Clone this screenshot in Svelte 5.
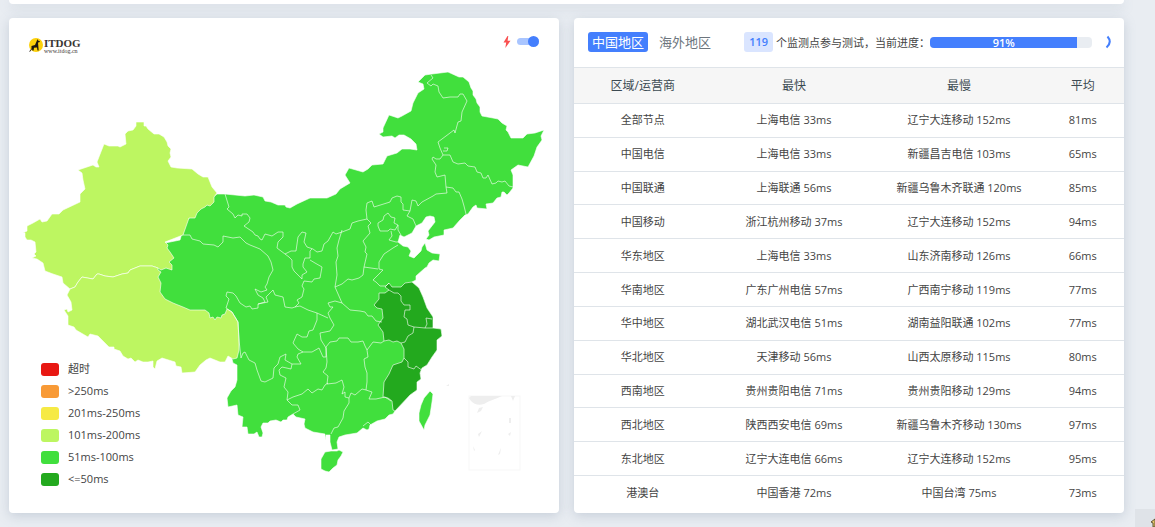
<!-- SpeedResult.svelte -->
<script>
    let region = 'cn';
    let live = true;
    let percent = 91;

    const tabs = [
        { id: 'cn', text: '中国地区' },
        { id: 'sea', text: '海外地区' }
    ];

    const legend = [
        { color: '#e81813', text: '超时' },
        { color: '#f89a36', text: '>250ms' },
        { color: '#f6ea45', text: '201ms-250ms' },
        { color: '#bdf661', text: '101ms-200ms' },
        { color: '#41df3d', text: '51ms-100ms' },
        { color: '#23a91e', text: '<=50ms' }
    ];

    const rows = [
        ['全部节点', '上海电信 33ms', '辽宁大连移动 152ms', '81ms'],
        ['中国电信', '上海电信 33ms', '新疆昌吉电信 103ms', '65ms'],
        ['中国联通', '上海联通 56ms', '新疆乌鲁木齐联通 120ms', '85ms'],
        ['中国移动', '浙江杭州移动 37ms', '辽宁大连移动 152ms', '94ms'],
        ['华东地区', '上海电信 33ms', '山东济南移动 126ms', '66ms'],
        ['华南地区', '广东广州电信 57ms', '广西南宁移动 119ms', '77ms'],
        ['华中地区', '湖北武汉电信 51ms', '湖南益阳联通 102ms', '77ms'],
        ['华北地区', '天津移动 56ms', '山西太原移动 115ms', '80ms'],
        ['西南地区', '贵州贵阳电信 71ms', '贵州贵阳移动 129ms', '94ms'],
        ['西北地区', '陕西西安电信 69ms', '新疆乌鲁木齐移动 130ms', '97ms'],
        ['东北地区', '辽宁大连电信 66ms', '辽宁大连移动 152ms', '95ms'],
        ['港澳台', '中国香港 72ms', '中国台湾 75ms', '73ms']
    ];

    // filled areas, grouped by speed level
    const areas = [
        // north, centre, south and east
        { level: 'mid', points: '217,194 225,194 245,196 254,195 263,197 265,201 271,202 278,205 285,205 286,207 290,208 297,204 310,198 327,198 336,194 340,189 350,183 345,175 349,168 363,172 368,169 372,165 383,164 387,156 397,153 402,149 410,149 417,150 416,144 411,139 404,135 399,135 395,138 392,136 383,137 379,134 383,132 383,128 389,115 398,118 402,116 411,111 413,103 418,93 424,89 423,84 418,82 425,75 432,74 448,72 459,77 463,77 469,82 471,88 473,91 473,95 476,99 477,103 480,107 480,112 482,116 493,118 498,119 502,123 507,126 506,130 508,132 511,138 523,138 527,134 535,133 544,130 541,136 542,140 537,147 534,156 528,167 518,165 511,170 513,175 513,188 509,193 507,195 504,192 502,192 501,197 497,198 493,203 486,204 487,209 477,208 476,205 473,207 468,214 465,215 460,220 453,228 444,230 444,235 434,237 429,240 426,239 429,235 428,231 435,222 434,217 430,216 426,217 422,223 416,226 412,233 404,237 400,235 398,242 403,246 408,247 411,251 409,256 414,258 421,251 422,247 425,243 427,250 432,253 440,254 439,261 433,260 429,263 427,267 425,268 416,276 416,280 412,282 419,288 423,297 427,308 433,317 433,328 441,329 442,336 437,340 437,350 432,357 427,365 422,368 420,373 421,379 417,382 417,390 410,395 395,411 393,414 389,415 385,419 377,421 370,425 369,429 367,430 363,428 357,433 345,435 339,437 337,442 338,449 332,450 330,442 330,435 326,435 325,440 325,434 313,432 305,428 304,424 305,419 296,417 293,414 288,417 287,420 283,420 281,422 276,420 270,421 268,423 263,423 261,427 263,433 262,437 259,437 257,432 254,434 248,434 247,427 242,427 243,417 238,415 237,405 228,407 227,398 231,391 235,387 237,380 237,365 233,363 232,359 225,340 190,322 150,300 150,270 165,243 180,240 185,222 205,203' },
        // Hainan
        { level: 'mid', points: '325,452 331,451 337,451 339,450 343,452 341,456 338,460 337,465 333,468 329,472 325,471 321,469 321,459' },
        // Taiwan
        { level: 'mid', points: '430,391 433,394 432,402 430,415 425,425 424,430 419,421 419,413 421,405 424,398' },
        // Xinjiang
        { level: 'slow', points: '136,122 144,122 144,126 146,126 148,129 154,134 159,134 164,137 167,142 168,146 171,149 170,153 171,157 168,161 171,167 177,168 192,169 198,174 203,177 208,177 212,187 217,193 214,197 214,202 210,206 207,205 205,207 201,209 197,213 195,218 189,218 183,235 165,242 168,245 167,248 170,252 174,258 169,262 172,265 172,270 166,268 161,270 158,268 152,266 140,266 130,270 128,273 122,274 113,277 105,276 99,274 97,274 93,279 82,277 78,282 75,287 70,289 63,283 62,277 53,274 45,271 43,263 37,259 32,258 36,256 34,254 36,252 35,242 31,240 27,240 25,237 25,233 23,233 27,231 27,226 33,223 40,219 42,222 47,221 52,214 59,214 63,210 80,202 80,194 83,191 85,189 83,180 82,173 78,170 93,165 96,167 99,167 97,162 104,144 109,146 118,146 120,147 126,144 125,134 128,131 133,130 136,126' },
        // Tibet
        { level: 'slow', points: '158,268 158,270 161,272 158,277 161,283 160,292 165,299 173,303 183,307 190,310 197,310 205,310 209,313 210,318 213,317 215,320 217,317 221,318 222,315 225,314 227,309 232,312 235,317 238,322 239,340 239,350 237,358 233,359 228,356 225,362 220,362 210,358 206,360 200,365 195,372 182,373 181,367 176,366 175,362 162,358 157,361 155,369 153,367 153,361 148,362 143,362 138,360 135,362 131,358 128,359 123,356 120,351 114,349 114,347 109,347 98,336 90,334 88,337 76,330 74,327 68,325 68,316 64,310 67,309 68,312 72,310 71,302 67,295 70,289 75,287 78,282 82,277 93,279 97,274 99,274 105,276 113,277 122,274 128,273 130,270 140,266 152,266' },
        // Jiangsu, Anhui, Shanghai, Zhejiang, Fujian
        { level: 'fast', points: '389,283 392,287 401,287 405,283 412,282 419,288 423,297 427,308 433,317 433,328 441,329 442,336 437,340 437,350 432,357 427,365 422,368 420,373 421,379 417,382 417,390 410,395 395,411 393,410 392,401 388,398 383,397 384,382 389,374 393,365 402,362 404,358 404,349 401,343 397,341 393,342 389,340 384,341 383,332 378,325 383,318 382,309 377,308 374,305 379,299 379,293 385,293 389,290 385,287' }
    ];

    // province borders inside the areas
    const borders = [
        '225,194 229,207 227,209 233,214 235,218 238,215 242,216 242,214 247,214 250,218 249,222 244,226 253,232 255,235 258,236 260,239 262,240 265,234 272,236 278,232 283,232 283,237 278,242 277,248 285,254 291,251 296,251 298,237 302,232 306,233 304,242 307,247 313,249 317,252 322,251 324,244 328,241 333,232 336,234 342,232 350,229 352,223 358,221 367,219 366,210 367,203 372,201 374,207 390,202 392,198 397,196 401,197 401,202 403,204 403,210 410,211 412,200 416,201 418,206 422,202 433,196 436,194 447,193 446,187 445,175 437,177 435,172 436,165 432,159 433,157 436,159 440,159 443,155 440,148 438,142 446,136 454,130 455,133 458,122 461,121 462,112 467,101 463,94 460,94 458,97 450,97 443,98 439,92 438,86 433,84 431,86 427,83 433,78 431,75',
        '443,155 450,155 453,162 458,164 465,163 468,166 475,167 477,172 481,173 483,178 486,178 488,175 492,184 496,183 498,181 502,182 505,181 509,186 513,187',
        '444,148 448,148 447,151 443,151',
        '446,187 453,188 456,192 459,192 462,199 464,206 466,214',
        '410,211 407,216 413,219 416,226',
        '378,223 383,220 384,216 388,213 391,217 395,218 394,223 398,225 395,230 390,229 388,231 380,231 378,226 378,223',
        '398,225 398,230 401,235',
        '391,231 392,236 389,240 396,242 398,242',
        '367,219 371,223 368,226 370,233 363,241 366,247 365,252 367,254 364,267 378,269',
        '398,245 393,248 387,252 384,254 379,262 379,269 383,270 373,280 376,282 380,286 386,286 389,283',
        '364,267 363,275 359,278 352,280 348,279 342,284 335,287',
        '342,230 339,240 337,248 338,256 336,262 337,275 335,287 342,303 350,310 360,311 365,312 368,316 372,316 376,321 382,322',
        '342,303 335,301 328,303 330,307 333,307 328,313 330,318 334,325 330,331 320,333 321,340 326,348 326,357 323,357 319,348 312,352 303,352 298,349 293,343 297,334 302,337 307,337 309,331 313,330 317,320 317,313',
        '285,254 289,257 292,260 292,267 294,271 299,276 302,279 302,275 307,272 303,267 303,264 305,258 310,258 310,251 312,249',
        '310,260 315,263 322,267 320,278 314,279 312,282 304,281 302,286 304,289 302,297 297,300 299,303 295,307 300,306 308,310 317,313 328,318',
        '183,235 190,235 192,239 200,241 203,244 214,245 218,247 223,242 223,236 233,238 240,237 246,243 250,245 260,249 268,256 271,262 273,270 269,277 267,284 265,287 267,290 261,292 255,289 258,295 263,298 265,302 258,304 258,308 252,309 250,306 246,307 240,303 236,296 233,293 227,292 226,296 229,299 226,308',
        '258,304 268,302 266,297 273,290 275,295 283,297 285,307 292,308 295,307',
        '326,347 330,342 337,341 339,338 348,338 351,342 358,342 363,341 365,346 367,350 373,342 381,343 384,341',
        '367,350 368,357 364,359 365,367 367,373 367,382 366,390',
        '326,347 327,362 326,368 323,372 328,376 327,384 336,383 342,380 344,387 342,394 345,392 345,397 349,398 351,393 355,395 362,389 366,390 372,392 369,399 376,399 385,397 391,401',
        '349,398 349,403 344,411 343,418 338,427 334,428 331,434',
        '287,400 293,397 302,394 308,389 312,393 318,389 322,390 325,385 328,383',
        '287,400 292,405 298,405 300,410 293,414',
        '287,400 288,392 284,387 286,378 280,375 279,370 282,367 291,369 292,364 301,364 297,357 298,354 303,352',
        '226,308 232,312 238,322 239,340 241,358 243,353 245,352 249,360 255,363 257,370 261,381 265,382 273,378 274,368 278,364 280,357 286,354 285,360 292,364',
        '389,290 394,293 398,293 401,296 401,301 404,305 410,305 410,310 405,310 404,317 407,319 408,325 414,327 425,328 433,328',
        '414,327 413,333 408,336 405,342 401,343',
        '425,328 427,324 426,318 432,319',
        '404,358 408,362 408,367 414,369 416,366 423,371',
        '363,426 368,422 371,425'
    ];
</script>

<main class="page">
    <div class="previous-card"></div>

    <div class="columns">
        <section class="card map-card">
            <svg class="map" viewBox="9 18 550 495" role="img" aria-label="中国地区">
                {#each areas as area}
                    <polygon class={area.level} points={area.points} />
                {/each}
                {#each borders as line}
                    <polyline class="border" points={line} />
                {/each}
                <g class="islands">
                    <rect x="469" y="396" width="51" height="74" />
                    <path d="M469 398l2-2h31c-6 3-12 4-18 8-6 2-10 0-13-3zM511 396h4l-2 5zM479 408l4-1-2 4-4 2zM509 418h2v5h-2zM478 434l4-3-3 6zM508 434l3-2-1 4zM500 450l1-2-1 6-2 1zM473 446l2 4-1 1z" />
                    <path d="M446 386l3-2v2z" />
                </g>
            </svg>

            <div class="map-bar">
                <div class="logo">
                    <svg width="16" height="16" viewBox="0 0 16 16" aria-hidden="true">
                        <circle cx="8" cy="8" r="7" fill="#fdd10b" />
                        <path fill="#1c1710" d="M9.500 2l.5 1.500 2 .7-.6 1-1.400.3.300 3.500.4 4.500H9.500L9 10.500l-3 .3-.4 2.700H4.400L4 12 2 14.800l-.8-.3L3.500 11.500V9L7 8l1.500-3.500z" />
                    </svg>
                    <div class="logo-text">
                        <span class="logo-name">ITDOG</span>
                        <span class="logo-url">www.itdog.cn</span>
                    </div>
                </div>
                <label class="live">
                    <svg width="8" height="12" viewBox="0 0 8 12" aria-hidden="true">
                        <path fill="#f95050" d="M4.500 0L.5 6.500h2.700L2.300 12 7.500 4.800H4.600L5.300 0z" />
                    </svg>
                    <input type="checkbox" aria-label="实时" bind:checked={live} />
                </label>
            </div>

            <ul class="legend">
                {#each legend as item}
                    <li>
                        <span class="swatch" style="background: {item.color};"></span>
                        {item.text}
                    </li>
                {/each}
            </ul>
        </section>

        <section class="card table-card">
            <header class="table-bar">
                <nav class="tabs">
                    {#each tabs as tab}
                        <button class:active={region === tab.id} on:click={() => (region = tab.id)}>{tab.text}</button>
                    {/each}
                </nav>
                <div class="status">
                    <span class="badge">119</span>
                    <span class="status-text">个监测点参与测试，当前进度：</span>
                    <div class="progress" role="progressbar" aria-label="当前进度" aria-valuenow={percent}>
                        <div class="progress-fill" style="width: {percent}%;">{percent}%</div>
                    </div>
                    <svg class="spinner" width="12" height="14" viewBox="0 0 12 14" aria-hidden="true">
                        <path d="M7.500 1.500C10.500 5 10.500 9 6.500 12.500" />
                    </svg>
                </div>
            </header>

            <table>
                <thead>
                    <tr>
                        <th class="area">区域/运营商</th>
                        <th class="node">最快</th>
                        <th class="node">最慢</th>
                        <th class="average">平均</th>
                    </tr>
                </thead>
                <tbody>
                    {#each rows as row}
                        <tr>
                            {#each row as cell}
                                <td>{cell}</td>
                            {/each}
                        </tr>
                    {/each}
                </tbody>
            </table>
        </section>
    </div>
</main>

<aside class="corner">
    <svg width="20" height="18" viewBox="0 0 20 18" aria-hidden="true">
        <path fill="#e8c765" stroke="#5f5335" d="M16 13l4-3v8h-2v-4z" />
    </svg>
</aside>

<style>
    :global(body) {
        background: #e9edf2;
    }

    .page {
        display: flex;
        flex-direction: column;
        gap: 14px;
        padding: 0 31px 14px 9px;
        font-family: "Open Sans", "Noto Sans CJK SC", sans-serif;
        font-size: 11px;
        color: #444;
    }

    .card,
    .previous-card {
        background: #fff;
        border-radius: 4px;
        box-shadow: 0 3px 12px rgba(110, 130, 155, 0.28);
    }

    .previous-card {
        height: 4px;
        border-radius: 0 0 4px 4px;
    }

    .columns {
        display: grid;
        grid-template-columns: 1fr 1fr;
        gap: 15px;
    }

    .map-card {
        position: relative;
    }

    .map {
        display: block;
        width: 100%;
    }

    .map polygon {
        stroke: rgba(255, 255, 255, 0.6);
        stroke-linejoin: round;
    }

    .mid {
        fill: #41df3d;
    }

    .slow {
        fill: #bdf661;
    }

    .fast {
        fill: #23a91e;
    }

    .border {
        fill: none;
        stroke: rgba(255, 255, 255, 0.6);
        stroke-linejoin: round;
    }

    .islands rect {
        fill: none;
        stroke: #f7f7f7;
    }

    .islands path {
        fill: #eee;
    }

    .map-bar {
        position: absolute;
        top: 16px;
        left: 19px;
        right: 20px;
        display: flex;
        justify-content: space-between;
        align-items: flex-start;
    }

    .logo {
        display: flex;
        align-items: center;
        padding-top: 3px;
    }

    .logo-text {
        display: flex;
        flex-direction: column;
        font-family: "Liberation Serif", serif;
        color: #3a3532;
    }

    .logo-name {
        font-size: 11px;
        font-weight: bold;
        line-height: 11px;
    }

    .logo-url {
        font-size: 6px;
        line-height: 4px;
    }

    .live {
        display: flex;
        align-items: center;
        gap: 6px;
        height: 15px;
    }

    .live input {
        appearance: none;
        display: flex;
        align-items: center;
        width: 22px;
        height: 7px;
        margin: 0;
        border-radius: 4px;
        background: #a9c5ff;
    }

    .live input::before {
        content: "";
        width: 11px;
        height: 11px;
        flex: none;
        border-radius: 50%;
        background: #447ffd;
    }

    .live input:checked {
        justify-content: flex-end;
    }

    .legend {
        position: absolute;
        left: 32px;
        bottom: 26px;
        display: flex;
        flex-direction: column;
        gap: 6px;
        margin: 0;
        padding: 0;
        list-style: none;
        line-height: 16px;
    }

    .legend li {
        display: flex;
        align-items: center;
        gap: 9px;
    }

    .swatch {
        width: 18px;
        height: 13px;
        border-radius: 3px;
    }

    .table-card {
        display: flex;
        flex-direction: column;
        padding-bottom: 4px;
    }

    .table-bar {
        display: flex;
        justify-content: space-between;
        align-items: center;
        height: 20px;
        padding: 14px 12px 15px 14px;
    }

    .tabs {
        display: flex;
        gap: 7px;
    }

    .tabs button {
        height: 20px;
        padding: 0 4px;
        border: 0;
        border-radius: 3px;
        background: none;
        color: #6c757d;
        font-family: inherit;
        font-size: 13px;
        line-height: 18px;
        white-space: nowrap;
        cursor: pointer;
    }

    .tabs .active {
        background: #447ffd;
        color: #fff;
    }

    .status {
        display: flex;
        align-items: center;
        white-space: nowrap;
    }

    .badge {
        padding: 0 5px;
        margin-right: 3px;
        border-radius: 3px;
        background: #dae5ff;
        color: #447ffd;
        font-weight: 600;
        line-height: 20px;
    }

    .progress {
        width: 162px;
        border-radius: 4px;
        background: #e9edf2;
    }

    .progress-fill {
        height: 11px;
        border-radius: 4px 0 0 4px;
        background: #447ffd;
        color: #fff;
        font-weight: 600;
        line-height: 11px;
        text-align: center;
    }

    .spinner {
        margin-left: 8px;
        fill: none;
        stroke: #447ffd;
        stroke-width: 2;
    }

    table {
        flex: 1;
        width: 100%;
        table-layout: fixed;
        border-collapse: collapse;
        text-align: center;
    }

    th {
        padding: 8px 0;
        border-top: 1px solid #dfe4e9;
        border-bottom: 1px solid #dfe4e9;
        background: #f6f6f6;
        color: #3c4a52;
        font-size: 12px;
        font-weight: normal;
        line-height: 19px;
    }

    td {
        padding: 7px 0;
        border-bottom: 1px solid #dfe4e9;
        line-height: 18px;
    }

    tr:last-child td {
        border-bottom: 0;
    }

    .area {
        width: 25%;
    }

    .node {
        width: 30%;
    }

    .average {
        width: 15%;
    }

    .corner {
        position: fixed;
        right: 0;
        bottom: 0;
        width: 20px;
        height: 18px;
        background: #dfe3e8;
    }
</style>
